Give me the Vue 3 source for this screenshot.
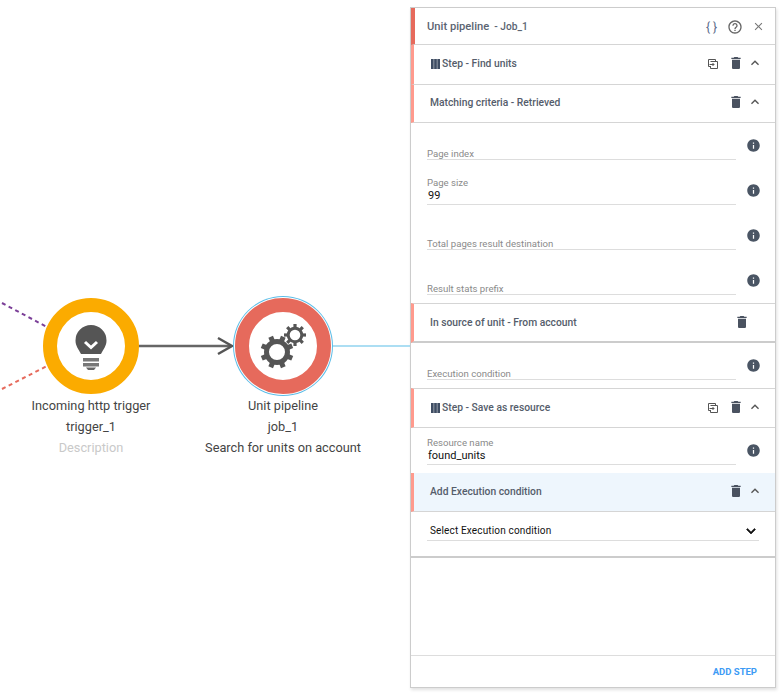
<script setup>
const bigTeeth = [0, 45, 90, 135, 180, 225, 270, 315]
const smallTeeth = [0, 45, 90, 135, 180, 225, 270, 315]
const trash = 'M6 19c0 1.1.9 2 2 2h8c1.1 0 2-.9 2-2V7H6v12zM19 4h-3.5l-1-1h-5l-1 1H5v2h14V4z'
const info = 'M12 2C6.48 2 2 6.48 2 12s4.48 10 10 10 10-4.48 10-10S17.52 2 12 2zm1 15h-2v-6h2v6zm0-8h-2V7h2v2z'
const up = 'M12 8l-6 6 1.41 1.41L12 10.83l4.59 4.58L18 14z'
const help = 'M11 18h2v-2h-2v2zm1-16C6.48 2 2 6.48 2 12s4.48 10 10 10 10-4.48 10-10S17.52 2 12 2zm0 18c-4.41 0-8-3.59-8-8s3.59-8 8-8 8 3.59 8 8-3.59 8-8 8zm0-14c-2.21 0-4 1.79-4 4h2c0-1.1.9-2 2-2s2 .9 2 2c0 2-3 1.75-3 5h2c0-2.25 3-2.5 3-5 0-2.21-1.79-4-4-4z'
const close = 'M19 6.41L17.59 5 12 10.59 6.41 5 5 6.41 10.59 12 5 17.59 6.41 19 12 13.41 17.59 19 19 17.59 13.41 12z'
const down = 'M16.59 8.59L12 13.17 7.41 8.59 6 10l6 6 6-6z'
</script>

<template>
  <div class="page">
    <div class="canvas">
      <svg class="edges" width="410" height="694" viewBox="0 0 410 694">
        <line x1="2" y1="303" x2="47" y2="327" stroke="#7b3f98" stroke-width="2" stroke-dasharray="4 3.500" />
        <line x1="2" y1="389" x2="47" y2="366" stroke="#e66a5c" stroke-width="2" stroke-dasharray="4 3.500" />
        <line x1="139" y1="346" x2="230" y2="346" stroke="#666" stroke-width="2.500" />
        <path d="M218 338 L232 346 L218 354" fill="none" stroke="#555" stroke-width="2.500" />
        <line x1="333" y1="346" x2="410" y2="346" stroke="#5bbde8" stroke-width="1.200" />
      </svg>

      <div class="node node-trigger">
        <div class="ring ring-amber">
          <svg width="68" height="68" viewBox="0 0 68 68">
            <path d="M34 13 a15.500 15.500 0 0 1 15.500 15.500 c0 5.500 -3 8.500 -5.500 13.500 h-20 c-2.500 -5 -5.500 -8 -5.500 -13.500 a15.500 15.500 0 0 1 15.500 -15.500z" fill="#555" />
            <path d="M28 30 l6 5.500 l6 -5.500" fill="none" stroke="#fff" stroke-width="3" />
            <rect x="26" y="46" width="16" height="3.500" fill="#777" />
            <rect x="26" y="51" width="16" height="3.500" fill="#777" />
            <path d="M29 55.500 h10 l-2 2.500 h-6z" fill="#666" />
          </svg>
        </div>
        <p class="label">Incoming http trigger</p>
        <p class="label">trigger_1</p>
        <p class="label muted">Description</p>
      </div>

      <div class="node node-job">
        <div class="ring ring-red">
          <svg width="68" height="68" viewBox="0 0 68 68">
            <g transform="translate(28 40)">
              <circle r="10.500" fill="none" stroke="#555" stroke-width="5" />
              <rect v-for="t in bigTeeth" :key="t" x="-2.500" y="-16.500" width="5" height="5" fill="#555" :transform="`rotate(${t + 22.500})`" />
            </g>
            <g transform="translate(46 23)">
              <circle r="6.800" fill="none" stroke="#555" stroke-width="3" />
              <rect v-for="t in smallTeeth" :key="t" x="-1.600" y="-11" width="3.200" height="4" fill="#555" :transform="`rotate(${t})`" />
            </g>
          </svg>
        </div>
        <p class="label">Unit pipeline</p>
        <p class="label">job_1</p>
        <p class="label">Search for units on account</p>
      </div>
    </div>

    <aside class="panel">
      <header class="top">
        <span class="top-title">Unit pipeline</span>
        <span class="top-sub">- Job_1</span>
        <span class="braces">{ }</span>
        <svg class="top-help" width="16" height="16" viewBox="0 0 24 24"><path :d="help" /></svg>
        <svg class="top-close" width="13" height="13" viewBox="0 0 24 24"><path :d="close" /></svg>
      </header>

      <div class="row row-step">
        <svg class="bars" width="9" height="10" viewBox="0 0 9 10"><rect x="0" width="2.700" height="10" /><rect x="3.150" width="2.700" height="10" /><rect x="6.300" width="2.700" height="10" /></svg>
        <span class="title">Step - Find units</span>
        <span class="act act-copy"><svg width="12" height="12" viewBox="0 0 12 12" fill="none" stroke="#555" stroke-width="1"><path d="M8.500 3 V1.500 H1.500 V8.500 H3" /><path d="M3.500 3.500 H10.500 V10.500 H3.500 V8" /><path d="M2.500 6.500 H7 M5.500 5 L7 6.500 L5.500 8" /></svg></span>
        <span class="act act-trash"><svg width="16" height="16" viewBox="0 0 24 24"><path :d="trash" /></svg></span>
        <span class="act act-up"><svg width="16" height="16" viewBox="0 0 24 24"><path :d="up" /></svg></span>
      </div>

      <div class="row row-criteria">
        <span class="title title-plain">Matching criteria - Retrieved</span>
        <span class="act act-trash"><svg width="16" height="16" viewBox="0 0 24 24"><path :d="trash" /></svg></span>
        <span class="act act-up"><svg width="16" height="16" viewBox="0 0 24 24"><path :d="up" /></svg></span>
      </div>

      <section class="form">
        <div class="field">
          <div class="input"><span class="lab">Page index</span></div>
          <svg class="info" width="15" height="15" viewBox="0 0 24 24"><path :d="info" /></svg>
        </div>
        <div class="field">
          <div class="input"><span class="lab">Page size</span><span class="val">99</span></div>
          <svg class="info" width="15" height="15" viewBox="0 0 24 24"><path :d="info" /></svg>
        </div>
        <div class="field">
          <div class="input"><span class="lab">Total pages result destination</span></div>
          <svg class="info" width="15" height="15" viewBox="0 0 24 24"><path :d="info" /></svg>
        </div>
        <div class="field">
          <div class="input"><span class="lab">Result stats prefix</span></div>
          <svg class="info" width="15" height="15" viewBox="0 0 24 24"><path :d="info" /></svg>
        </div>
      </section>

      <div class="row row-source">
        <span class="title title-plain">In source of unit - From account</span>
        <span class="act act-solo"><svg width="16" height="16" viewBox="0 0 24 24"><path :d="trash" /></svg></span>
      </div>

      <section class="form">
        <div class="field">
          <div class="input"><span class="lab">Execution condition</span></div>
          <svg class="info" width="15" height="15" viewBox="0 0 24 24"><path :d="info" /></svg>
        </div>
      </section>

      <div class="row row-step row-save">
        <svg class="bars" width="9" height="10" viewBox="0 0 9 10"><rect x="0" width="2.700" height="10" /><rect x="3.150" width="2.700" height="10" /><rect x="6.300" width="2.700" height="10" /></svg>
        <span class="title">Step - Save as resource</span>
        <span class="act act-copy"><svg width="12" height="12" viewBox="0 0 12 12" fill="none" stroke="#555" stroke-width="1"><path d="M8.500 3 V1.500 H1.500 V8.500 H3" /><path d="M3.500 3.500 H10.500 V10.500 H3.500 V8" /><path d="M2.500 6.500 H7 M5.500 5 L7 6.500 L5.500 8" /></svg></span>
        <span class="act act-trash"><svg width="16" height="16" viewBox="0 0 24 24"><path :d="trash" /></svg></span>
        <span class="act act-up"><svg width="16" height="16" viewBox="0 0 24 24"><path :d="up" /></svg></span>
      </div>

      <section class="form">
        <div class="field">
          <div class="input"><span class="lab">Resource name</span><span class="val">found_units</span></div>
          <svg class="info" width="15" height="15" viewBox="0 0 24 24"><path :d="info" /></svg>
        </div>
      </section>

      <div class="row row-add">
        <span class="title title-plain">Add Execution condition</span>
        <span class="act act-trash"><svg width="16" height="16" viewBox="0 0 24 24"><path :d="trash" /></svg></span>
        <span class="act act-up"><svg width="16" height="16" viewBox="0 0 24 24"><path :d="up" /></svg></span>
      </div>

      <div class="select-wrap">
        <div class="select">
          <span>Select Execution condition</span>
          <svg width="18" height="18" viewBox="0 0 24 24"><path :d="down" /></svg>
        </div>
      </div>

      <div class="spacer"></div>

      <footer class="foot"><span class="add">ADD STEP</span></footer>
    </aside>
  </div>
</template>

<style scoped>
.page {
  display: flex;
  align-items: flex-start;
  width: 784px;
  height: 694px;
  overflow: hidden;
  background: #fff;
  font-family: Roboto, "Liberation Sans", sans-serif;
}
.canvas {
  position: relative;
  flex: 0 0 410px;
  height: 694px;
}
.edges {
  position: absolute;
  left: 0;
  top: 0;
}
.node {
  position: absolute;
  top: 298px;
  width: 200px;
  display: flex;
  flex-direction: column;
  align-items: center;
}
.node-trigger {
  left: -9px;
}
.node-job {
  left: 183px;
}
.ring {
  box-sizing: border-box;
  width: 96px;
  height: 96px;
  border-radius: 50%;
  border: 14px solid #fbab00;
  background: #fff;
  margin-bottom: 1px;
}
.ring svg {
  display: block;
}
.ring-red {
  border-color: #e66a5c;
  box-shadow: 0 0 0 1px #fff, 0 0 0 2px #5bbde8;
}
.label {
  margin: 0;
  font-size: 12.750px;
  line-height: 21px;
  color: #444;
  white-space: nowrap;
}
.muted {
  color: #c9c9c9;
}
.panel {
  box-sizing: border-box;
  flex: 0 0 366px;
  height: 681px;
  margin-top: 7px;
  display: flex;
  flex-direction: column;
  border: 1px solid #ccc;
  box-shadow: 1px 2px 3px rgba(0, 0, 0, 0.12);
  background: #fff;
}
.top {
  box-sizing: border-box;
  flex: 0 0 37px;
  display: flex;
  align-items: center;
  border-left: 4px solid #e66a5c;
  border-bottom: 1px solid #d5d5d5;
  padding-left: 12px;
  padding-top: 1px;
  color: #5b6472;
}
.top-title {
  font-size: 11.200px;
  font-weight: 500;
}
.top-sub {
  margin-left: 5px;
  font-size: 10.200px;
  font-weight: 500;
}
.braces {
  margin-left: auto;
  font-size: 12px;
  color: #5a6a8a;
}
.top-help {
  margin-left: 10px;
  fill: #666;
}
.top-close {
  margin: 0 10px 0 9px;
  fill: #777;
}
.row {
  box-sizing: border-box;
  display: flex;
  align-items: center;
  border-left: 3px solid #ff9a8d;
  border-bottom: 1px solid #d5d5d5;
  padding-left: 16px;
  padding-right: 11px;
  padding-bottom: 2px;
}
.row-step {
  flex: 0 0 40px;
  padding-left: 17px;
}
.row-save {
  border-top: 1px solid #d5d5d5;
  padding-bottom: 1px;
}
.row-criteria {
  flex: 0 0 38px;
}
.row-source {
  flex: 0 0 40px;
  border-top: 1px solid #d5d5d5;
  border-bottom-width: 2px;
  border-bottom-color: #ccc;
  padding-bottom: 1px;
}
.row-add {
  flex: 0 0 39px;
  background: #eef6fd;
}
.bars {
  fill: #3f4d63;
  margin-right: 2px;
}
.title {
  flex: 1;
  font-size: 10.300px;
  font-weight: 500;
  color: #555d6b;
}
.act {
  display: flex;
  justify-content: center;
  fill: #4a5260;
}
.act-copy {
  width: 26px;
}
.act-trash {
  width: 20px;
  margin-top: -1px;
}
.act-up {
  width: 18px;
  margin-top: -1px;
  fill: #555;
}
.act-solo {
  width: 20px;
  margin-right: 12px;
}
.form {
  padding-bottom: 8px;
  display: flex;
  flex-direction: column;
}
.field {
  box-sizing: border-box;
  height: 45px;
  display: flex;
  align-items: flex-end;
  padding-left: 16px;
}
.field:first-child {
  height: 37px;
}
.input {
  box-sizing: border-box;
  flex: 0 0 309px;
  display: flex;
  flex-direction: column;
  border-bottom: 1px solid #ddd;
  padding-bottom: 2px;
}
.lab {
  font-size: 9.600px;
  line-height: 13px;
  color: #8a8a8a;
}
.lab:only-child {
  margin-bottom: -3px;
}
.val {
  font-size: 11px;
  line-height: 13px;
  color: #111;
  padding-left: 1px;
}
.info {
  fill: #4a5564;
  margin: 0 0 7px 10px;
}
.select-wrap {
  box-sizing: border-box;
  flex: 0 0 46px;
  padding: 0 16px 0 16px;
  border-bottom: 2px solid #ccc;
}
.select {
  box-sizing: border-box;
  height: 29px;
  display: flex;
  align-items: flex-end;
  justify-content: space-between;
  border-bottom: 1px solid #ddd;
  padding-left: 3px;
  font-size: 10px;
  line-height: 18px;
  letter-spacing: 0.150px;
  color: #111;
}
.select svg {
  fill: #111;
  stroke: #111;
  stroke-width: 0.800;
  margin-right: -1px;
}
.spacer {
  flex: 1;
}
.foot {
  box-sizing: border-box;
  flex: 0 0 32px;
  display: flex;
  align-items: center;
  justify-content: flex-end;
  border-top: 1px solid #ddd;
  padding-right: 18px;
}
.add {
  font-size: 9.500px;
  font-weight: 700;
  color: #3d9bf5;
}
</style>
